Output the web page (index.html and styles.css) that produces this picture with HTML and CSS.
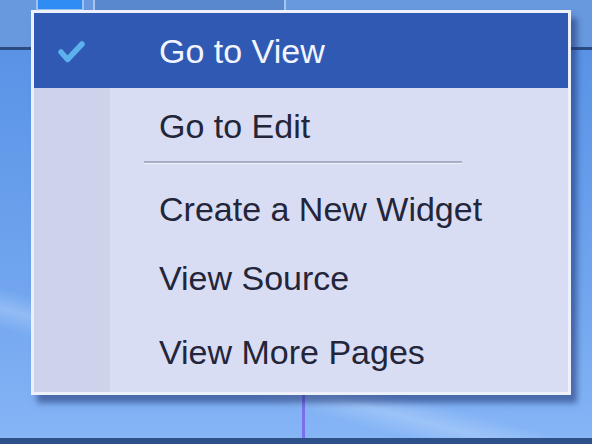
FILE: index.html
```html
<!DOCTYPE html>
<html lang="en">
<head>
<meta charset="utf-8">
<title>Context menu</title>
<link rel="stylesheet" href="styles.css">
</head>
<body>
<div class="desktop">
  <ul class="menu">
    <li class="item item--active">
      <span class="gutter">
        <svg class="check" width="32" height="26" viewBox="0 0 32 26"><path d="M5 13 L11.5 20.5 L26 5" fill="none" stroke="#5cb0ec" stroke-width="5.5" stroke-linecap="round" stroke-linejoin="round"/></svg>
      </span>
      <span class="label">Go to View</span>
    </li>
    <li class="item item--b"><span class="gutter"></span><span class="label">Go to Edit</span></li>
    <li class="sep"><span class="gutter"></span><span class="rule"></span></li>
    <li class="item item--c"><span class="gutter"></span><span class="label">Create a New Widget</span></li>
    <li class="item"><span class="gutter"></span><span class="label">View Source</span></li>
    <li class="item item--last"><span class="gutter"></span><span class="label">View More Pages</span></li>
  </ul>
</div>
</body>
</html>
```
FILE: styles.css
```css
html, body {
  margin: 0;
  padding: 0;
}
body {
  width: 592px;
  height: 444px;
  overflow: hidden;
  font-family: "Liberation Sans", Arial, sans-serif;
}
.desktop {
  position: relative;
  width: 592px;
  height: 444px;
  background:
    linear-gradient(#2e5189, #2e5189) 0 438px / 100% 6px no-repeat,
    linear-gradient(#7b6ff0, #7b6ff0) 302px 395px / 3px 44px no-repeat,
    linear-gradient(#2c4b82, #2c4b82) 0 47px / 100% 3px no-repeat,
    linear-gradient(#a6c4ee, #a6c4ee) 93px 0 / 2px 10px no-repeat,
    linear-gradient(#a6c4ee, #a6c4ee) 284px 0 / 2px 10px no-repeat,
    linear-gradient(#5a88cf, #5a88cf) 95px 0 / 189px 10px no-repeat,
    linear-gradient(#2f8cf2, #2f8cf2) 38px 0 / 44px 9px no-repeat,
    linear-gradient(#9cc2f2, #9cc2f2) 36px 0 / 48px 11px no-repeat,
    linear-gradient(195deg, transparent 74%, rgba(210, 230, 255, 0.32) 77.5%, transparent 81%),
    linear-gradient(to bottom, #6898de 0, #6898de 47px, #5a93e6 50px, #72a6ef 300px, #86b5f6 437px);
}
.menu {
  position: absolute;
  left: 31px;
  top: 10px;
  width: 534px;
  height: 379px;
  margin: 0;
  padding: 0;
  list-style: none;
  border: 3px solid #eef1fb;
  background: linear-gradient(to right, #cdd3ea 0, #cdd3ea 76px, #d8ddf3 76px);
  box-shadow: 6px 8px 6px rgba(28, 48, 110, 0.55);
  display: flex;
  flex-direction: column;
}
.item {
  display: flex;
  height: 74px;
  flex: none;
}
.item--active {
  height: 75px;
  background: #3059b4;
}
.item--b { height: 73px; }
.item--c { height: 69px; }
.item--last { flex: 1; }
.gutter {
  width: 76px;
  flex: none;
  display: flex;
  align-items: flex-start;
  justify-content: center;
}
.check {
  margin-top: 26px;
}
.label {
  padding-left: 49px;
  padding-top: 18px;
  font-size: 34px;
  line-height: 40px;
  color: #23253a;
  white-space: nowrap;
}
.item--active .label {
  color: #f2f5ff;
}
.sep {
  display: flex;
  height: 10px;
  flex: none;
}
.rule {
  margin-left: 34px;
  width: 318px;
  height: 2px;
  background: #a8aec8;
  border-bottom: 1px solid #eef0fa;
}
```
